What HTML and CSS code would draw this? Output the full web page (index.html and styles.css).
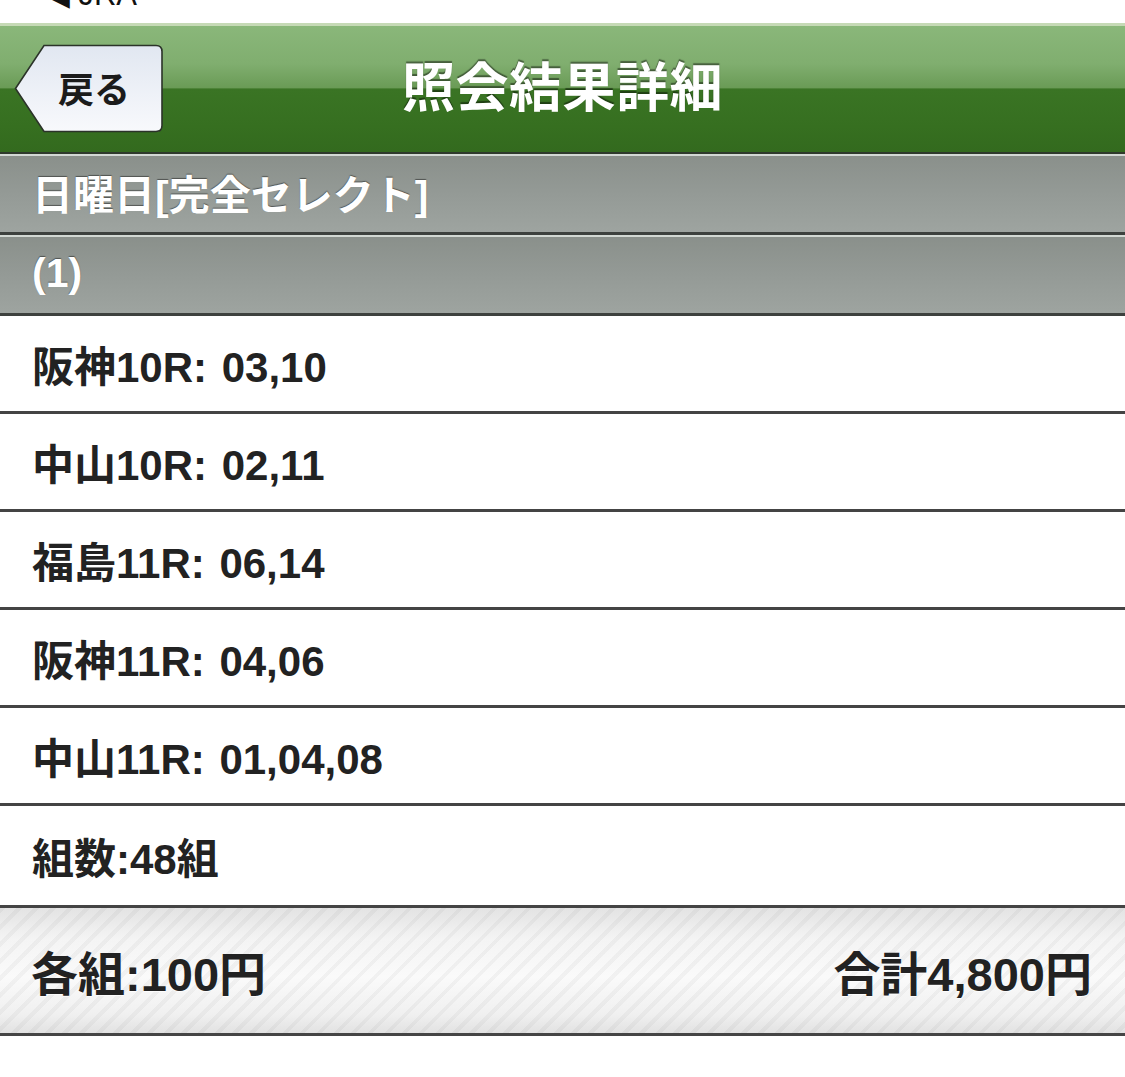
FILE: index.html
```html
<!DOCTYPE html>
<html lang="ja">
<head>
<meta charset="utf-8">
<title>照会結果詳細</title>
<link rel="stylesheet" href="styles.css">
</head>
<body>
<div class="status"><span class="status-text">◀ JRA</span></div>
<header class="navbar">
  <div class="back">
    <svg class="back-shape" viewBox="0 0 150 90" width="150" height="90">
      <defs>
        <linearGradient id="backGrad" x1="0" y1="0" x2="0" y2="1">
          <stop offset="0" stop-color="#e1e7f1"/>
          <stop offset="1" stop-color="#f8f9fc"/>
        </linearGradient>
      </defs>
      <path d="M1.5 44.5 L30 1.5 H142 Q148 1.5 148 7.5 V81.5 Q148 87.5 142 87.5 H30 Z" fill="url(#backGrad)" stroke="#2b3329" stroke-width="1.6"/>
      <text class="back-label" x="80" y="59" text-anchor="middle">戻る</text>
    </svg>
  </div>
  <h1 class="title">照会結果詳細</h1>
  <div class="spacer"></div>
</header>
<div class="section">日曜日[完全セレクト]</div>
<div class="section">(1)</div>
<ul class="rows">
  <li class="row">阪神10R: 03,10</li>
  <li class="row">中山10R: 02,11</li>
  <li class="row">福島11R: 06,14</li>
  <li class="row">阪神11R: 04,06</li>
  <li class="row">中山11R: 01,04,08</li>
  <li class="row row-count">組数:48組</li>
</ul>
<footer class="total">
  <span>各組:100円</span>
  <span>合計4,800円</span>
</footer>
</body>
</html>
```
FILE: styles.css
```css
html, body {
  margin: 0;
  padding: 0;
  background: #ffffff;
}
body {
  font-family: "Liberation Sans", "Noto Sans CJK JP", sans-serif;
  font-weight: 700;
  color: #222222;
}
.status {
  height: 23px;
  overflow: hidden;
  padding-left: 46px;
}
.status-text {
  display: block;
  margin-top: -21px;
  font-size: 31px;
  line-height: 1;
  font-weight: 400;
  color: #111;
  font-family: "Liberation Sans", "DejaVu Sans", sans-serif;
}
.navbar {
  display: grid;
  grid-template-columns: 1fr auto 1fr;
  align-items: center;
  height: 126px;
  border-top: 3px solid #c6dab6;
  border-bottom: 2px solid #2f3a2c;
  background: linear-gradient(to bottom, #8ab77a 0%, #80ae6f 30%, #6a9b56 49%, #3a7424 50%, #366f20 80%, #336a1e 100%);
}
.back {
  display: grid;
  justify-self: start;
  margin-left: 14px;
}
.back-shape {
  display: block;
}
.back-label {
  font-family: "Liberation Sans", "Noto Sans CJK JP", sans-serif;
  font-size: 36px;
  font-weight: 700;
  fill: #1b1b1b;
}
.title {
  margin: 0;
  font-size: 53px;
  font-weight: 700;
  color: #ffffff;
  text-shadow: 0 -2px 1px rgba(0, 0, 0, 0.45);
  line-height: 1.2;
  letter-spacing: 0.5px;
}
.section {
  display: flex;
  align-items: center;
  height: 72px;
  padding: 0 0 4px 32px;
  border-top: 2px solid #d3d9d4;
  border-bottom: 3px solid #3d413e;
  background: linear-gradient(to bottom, #8a908b 0%, #949a96 50%, #9ea4a0 100%);
  color: #ffffff;
  font-size: 41px;
  text-shadow: 0 -1px 1px rgba(0, 0, 0, 0.45);
}
.rows {
  list-style: none;
  margin: 0;
  padding: 0;
}
.row {
  display: flex;
  align-items: center;
  height: 95px;
  padding-left: 32px;
  border-bottom: 3px solid #444444;
  font-size: 42px;
  color: #222222;
  word-spacing: 3px;
}
.row-count {
  height: 99px;
}
.total {
  display: flex;
  justify-content: space-between;
  align-items: center;
  height: 125px;
  padding: 0 33px 0 31px;
  border-bottom: 3px solid #454545;
  font-size: 47px;
  color: #222222;
  text-shadow: 0 1px 0 rgba(255, 255, 255, 0.8);
  background:
    repeating-linear-gradient(135deg, rgba(0, 0, 0, 0.035) 0px, rgba(0, 0, 0, 0.035) 4px, rgba(0, 0, 0, 0) 4px, rgba(0, 0, 0, 0) 12px),
    linear-gradient(to bottom, #e3e3e3 0%, #f4f4f4 25%, #fafafa 55%, #f0f0f0 85%, #e2e2e2 100%);
}
```
